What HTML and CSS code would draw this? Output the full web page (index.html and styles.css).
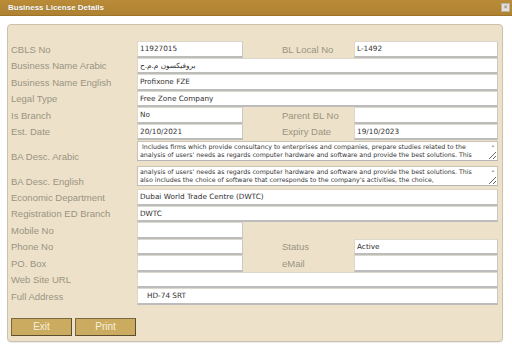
FILE: index.html
```html
<!DOCTYPE html>
<html lang="en">
<head>
    <meta charset="UTF-8">
    <title>Business License Details</title>
    <link rel="stylesheet" href="styles.css">
</head>
<body>
    <div class="titlebar">
        <span class="title">Business License Details</span>
        <span class="close">&#x2715;</span>
    </div>

    <div class="panel">
        <div class="form">
            <label class="lbl">CBLS No</label>
            <input class="fld" readonly value="11927015">
            <label class="lbl lbl-right">BL Local No</label>
            <input class="fld" readonly value="L-1492">

            <label class="lbl">Business Name Arabic</label>
            <input class="fld wide" readonly value="بروفيكسون م.م.ح">

            <label class="lbl">Business Name English</label>
            <input class="fld wide" readonly value="Profixone FZE">

            <label class="lbl">Legal Type</label>
            <input class="fld wide" readonly value="Free Zone Company">

            <label class="lbl">Is Branch</label>
            <input class="fld" readonly value="No">
            <label class="lbl lbl-right">Parent BL No</label>
            <input class="fld" readonly value="">

            <label class="lbl">Est. Date</label>
            <input class="fld" readonly value="20/10/2021">
            <label class="lbl lbl-right">Expiry Date</label>
            <input class="fld" readonly value="19/10/2023">

            <label class="lbl lbl-low">BA Desc. Arabic</label>
            <div class="memo wide">
                <textarea class="memo-text" readonly> Includes firms which provide consultancy to enterprises and companies, prepare studies related to the
analysis of users' needs as regards computer hardware and software and provide the best solutions. This</textarea>
                <span class="memo-arrow">&#9650;</span>
            </div>

            <label class="lbl lbl-low">BA Desc. English</label>
            <div class="memo memo-en wide">
                <textarea class="memo-text" readonly>analysis of users' needs as regards computer hardware and software and provide the best solutions. This
also includes the choice of software that corresponds to the company's activities, the choice,</textarea>
                <span class="memo-arrow">&#9650;</span>
            </div>

            <label class="lbl">Economic Department</label>
            <input class="fld wide" readonly value="Dubai World Trade Centre (DWTC)">

            <label class="lbl">Registration ED Branch</label>
            <input class="fld wide" readonly value="DWTC">

            <label class="lbl">Mobile No</label>
            <input class="fld" readonly value="">
            <div class="blank"></div>

            <label class="lbl">Phone No</label>
            <input class="fld" readonly value="">
            <label class="lbl lbl-right">Status</label>
            <input class="fld" readonly value="Active">

            <label class="lbl">PO. Box</label>
            <input class="fld" readonly value="">
            <label class="lbl lbl-right">eMail</label>
            <input class="fld" readonly value="">

            <label class="lbl">Web Site URL</label>
            <input class="fld wide" readonly value="">

            <label class="lbl">Full Address</label>
            <input class="fld wide indent" readonly value="HD-74 SRT">
        </div>

        <div class="actions">
            <button class="btn">Exit</button>
            <button class="btn">Print</button>
        </div>
    </div>
</body>
</html>
```

FILE: styles.css
```css
* {
    box-sizing: border-box;
    margin: 0;
    padding: 0;
}
body {
    font-family: "Liberation Sans", Arial, sans-serif;
    background-color: #fff;
    width: 512px;
    height: 350px;
    overflow: hidden;
}
.titlebar {
    height: 16px;
    background: linear-gradient(#ba8c38, #ae8232);
    border-bottom: 1px solid #9c7329;
    display: flex;
    align-items: center;
    justify-content: space-between;
    padding: 0 2px 0 8px;
}
.title {
    color: #fff;
    font-weight: bold;
    font-size: 8px;
    text-shadow: 0 0 1px rgba(0,0,0,0.3);
}
.close {
    width: 9px;
    height: 9px;
    background-color: #e6e2da;
    border: 1px solid #b9b2a4;
    color: #8a8378;
    font-size: 6px;
    line-height: 7px;
    text-align: center;
}
.panel {
    margin: 8px 0 0 7px;
    width: 496px;
    height: 318px;
    background-color: #ede2c9;
    border: 1px solid #cbc2ad;
    border-radius: 4px;
    box-shadow: 0 1px 1px rgba(0,0,0,0.08);
    padding-top: 16px;
}
.form {
    display: grid;
    grid-template-columns: 129px 106px 111px 144px;
    grid-template-rows: repeat(6, 16.5px) 24px 25px repeat(7, 16.5px);
}
.lbl {
    align-self: center;
    padding-left: 3px;
    font-size: 9.5px;
    color: #9a9383;
    white-space: nowrap;
}
.lbl-right {
    padding-left: 39px;
}
.lbl-low {
    align-self: end;
    padding-bottom: 2px;
}
.fld {
    width: 100%;
    height: 100%;
    background-color: #fff;
    border: 1px solid #ddd8cc;
    border-bottom: 2px solid #bcbcbc;
    border-right-color: #c8c8c8;
    padding: 0 2px;
    font-family: "DejaVu Sans", Verdana, sans-serif;
    font-size: 7.3px;
    color: #333;
    outline: none;
}
.wide {
    grid-column: 2 / 5;
}
.indent {
    padding-left: 9px;
}
.blank {
    grid-column: 3 / 5;
}
.memo {
    position: relative;
    height: 20px;
    margin-top: 1px;
}
.memo-en {
    margin-top: 2px;
}
.memo-text {
    display: block;
    width: 100%;
    height: 100%;
    background-color: #fff;
    border: 1px solid #c9c3b6;
    border-bottom-color: #b5b5b5;
    padding: 1px 10px 0 2px;
    font-family: "DejaVu Sans", Verdana, sans-serif;
    font-size: 6.3px;
    line-height: 8.2px;
    color: #333;
    white-space: pre;
    overflow: hidden;
    resize: both;
    outline: none;
}
.memo-arrow {
    position: absolute;
    top: 2px;
    right: 3px;
    font-size: 4px;
    color: #9a9a9a;
}
.actions {
    display: flex;
    gap: 3px;
    margin: 13px 0 0 3px;
}
.btn {
    width: 61px;
    height: 18px;
    background-color: #cbab5f;
    border: 1px solid #5d4e2f;
    border-top-color: #7a6842;
    border-left-color: #7a6842;
    color: #f7f0de;
    font-family: "Liberation Sans", Arial, sans-serif;
    font-size: 10px;
}
```
